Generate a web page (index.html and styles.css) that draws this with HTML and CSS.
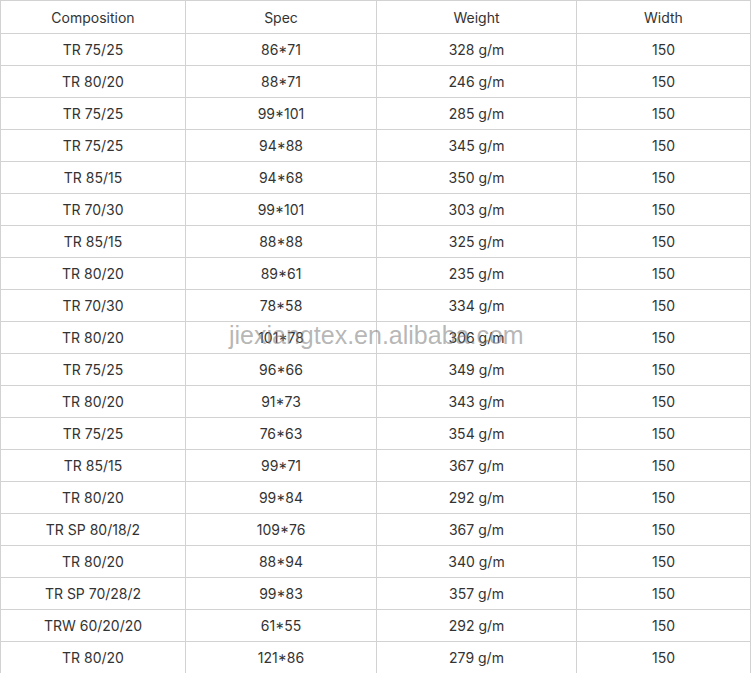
FILE: index.html
```html
<!DOCTYPE html>
<html>
<head>
<meta charset="utf-8">
<link rel="stylesheet" href="styles.css">
</head>
<body>
<div class="wrap">
<table class="spec">
<colgroup><col class="c1"><col class="c2"><col class="c3"><col class="c4"></colgroup>
<thead>
<tr><th>Composition</th><th>Spec</th><th>Weight</th><th>Width</th></tr>
</thead>
<tbody>
<tr><td>TR 75/25</td><td>86*71</td><td>328 g/m</td><td>150</td></tr>
<tr><td>TR 80/20</td><td>88*71</td><td>246 g/m</td><td>150</td></tr>
<tr><td>TR 75/25</td><td>99*101</td><td>285 g/m</td><td>150</td></tr>
<tr><td>TR 75/25</td><td>94*88</td><td>345 g/m</td><td>150</td></tr>
<tr><td>TR 85/15</td><td>94*68</td><td>350 g/m</td><td>150</td></tr>
<tr><td>TR 70/30</td><td>99*101</td><td>303 g/m</td><td>150</td></tr>
<tr><td>TR 85/15</td><td>88*88</td><td>325 g/m</td><td>150</td></tr>
<tr><td>TR 80/20</td><td>89*61</td><td>235 g/m</td><td>150</td></tr>
<tr><td>TR 70/30</td><td>78*58</td><td>334 g/m</td><td>150</td></tr>
<tr><td>TR 80/20</td><td>101*78</td><td>306 g/m</td><td>150</td></tr>
<tr><td>TR 75/25</td><td>96*66</td><td>349 g/m</td><td>150</td></tr>
<tr><td>TR 80/20</td><td>91*73</td><td>343 g/m</td><td>150</td></tr>
<tr><td>TR 75/25</td><td>76*63</td><td>354 g/m</td><td>150</td></tr>
<tr><td>TR 85/15</td><td>99*71</td><td>367 g/m</td><td>150</td></tr>
<tr><td>TR 80/20</td><td>99*84</td><td>292 g/m</td><td>150</td></tr>
<tr><td>TR SP 80/18/2</td><td>109*76</td><td>367 g/m</td><td>150</td></tr>
<tr><td>TR 80/20</td><td>88*94</td><td>340 g/m</td><td>150</td></tr>
<tr><td>TR SP 70/28/2</td><td>99*83</td><td>357 g/m</td><td>150</td></tr>
<tr><td>TRW 60/20/20</td><td>61*55</td><td>292 g/m</td><td>150</td></tr>
<tr><td>TR 80/20</td><td>121*86</td><td>279 g/m</td><td>150</td></tr>
</tbody>
</table>
<div class="watermark">jiexiangtex.en.alibaba.com</div>
</div>
</body>
</html>
```
FILE: styles.css
```css
html, body {
  margin: 0;
  padding: 0;
  background: #fff;
}
.wrap {
  position: relative;
  width: 750px;
}
.spec {
  border-collapse: collapse;
  table-layout: fixed;
  width: 750px;
  font-family: Inter, "Noto Sans", sans-serif;
  font-size: 14px;
  color: #333;
}
.c1 { width: 185px; }
.c2 { width: 191px; }
.c3 { width: 200px; }
.c4 { width: 174px; }
.spec th, .spec td {
  border: 1px solid #d2d2d2;
  height: 31px;
  padding: 0;
  text-align: center;
  vertical-align: middle;
  font-weight: 400;
  line-height: 20px;
}
.spec th {
  height: 31px;
  padding-top: 1px;
}
.watermark {
  position: absolute;
  left: 229px;
  top: 318px;
  font-family: "Liberation Sans", Arial, sans-serif;
  font-size: 25px;
  line-height: 34px;
  color: rgba(120, 120, 120, 0.55);
  white-space: nowrap;
  pointer-events: none;
}
```
